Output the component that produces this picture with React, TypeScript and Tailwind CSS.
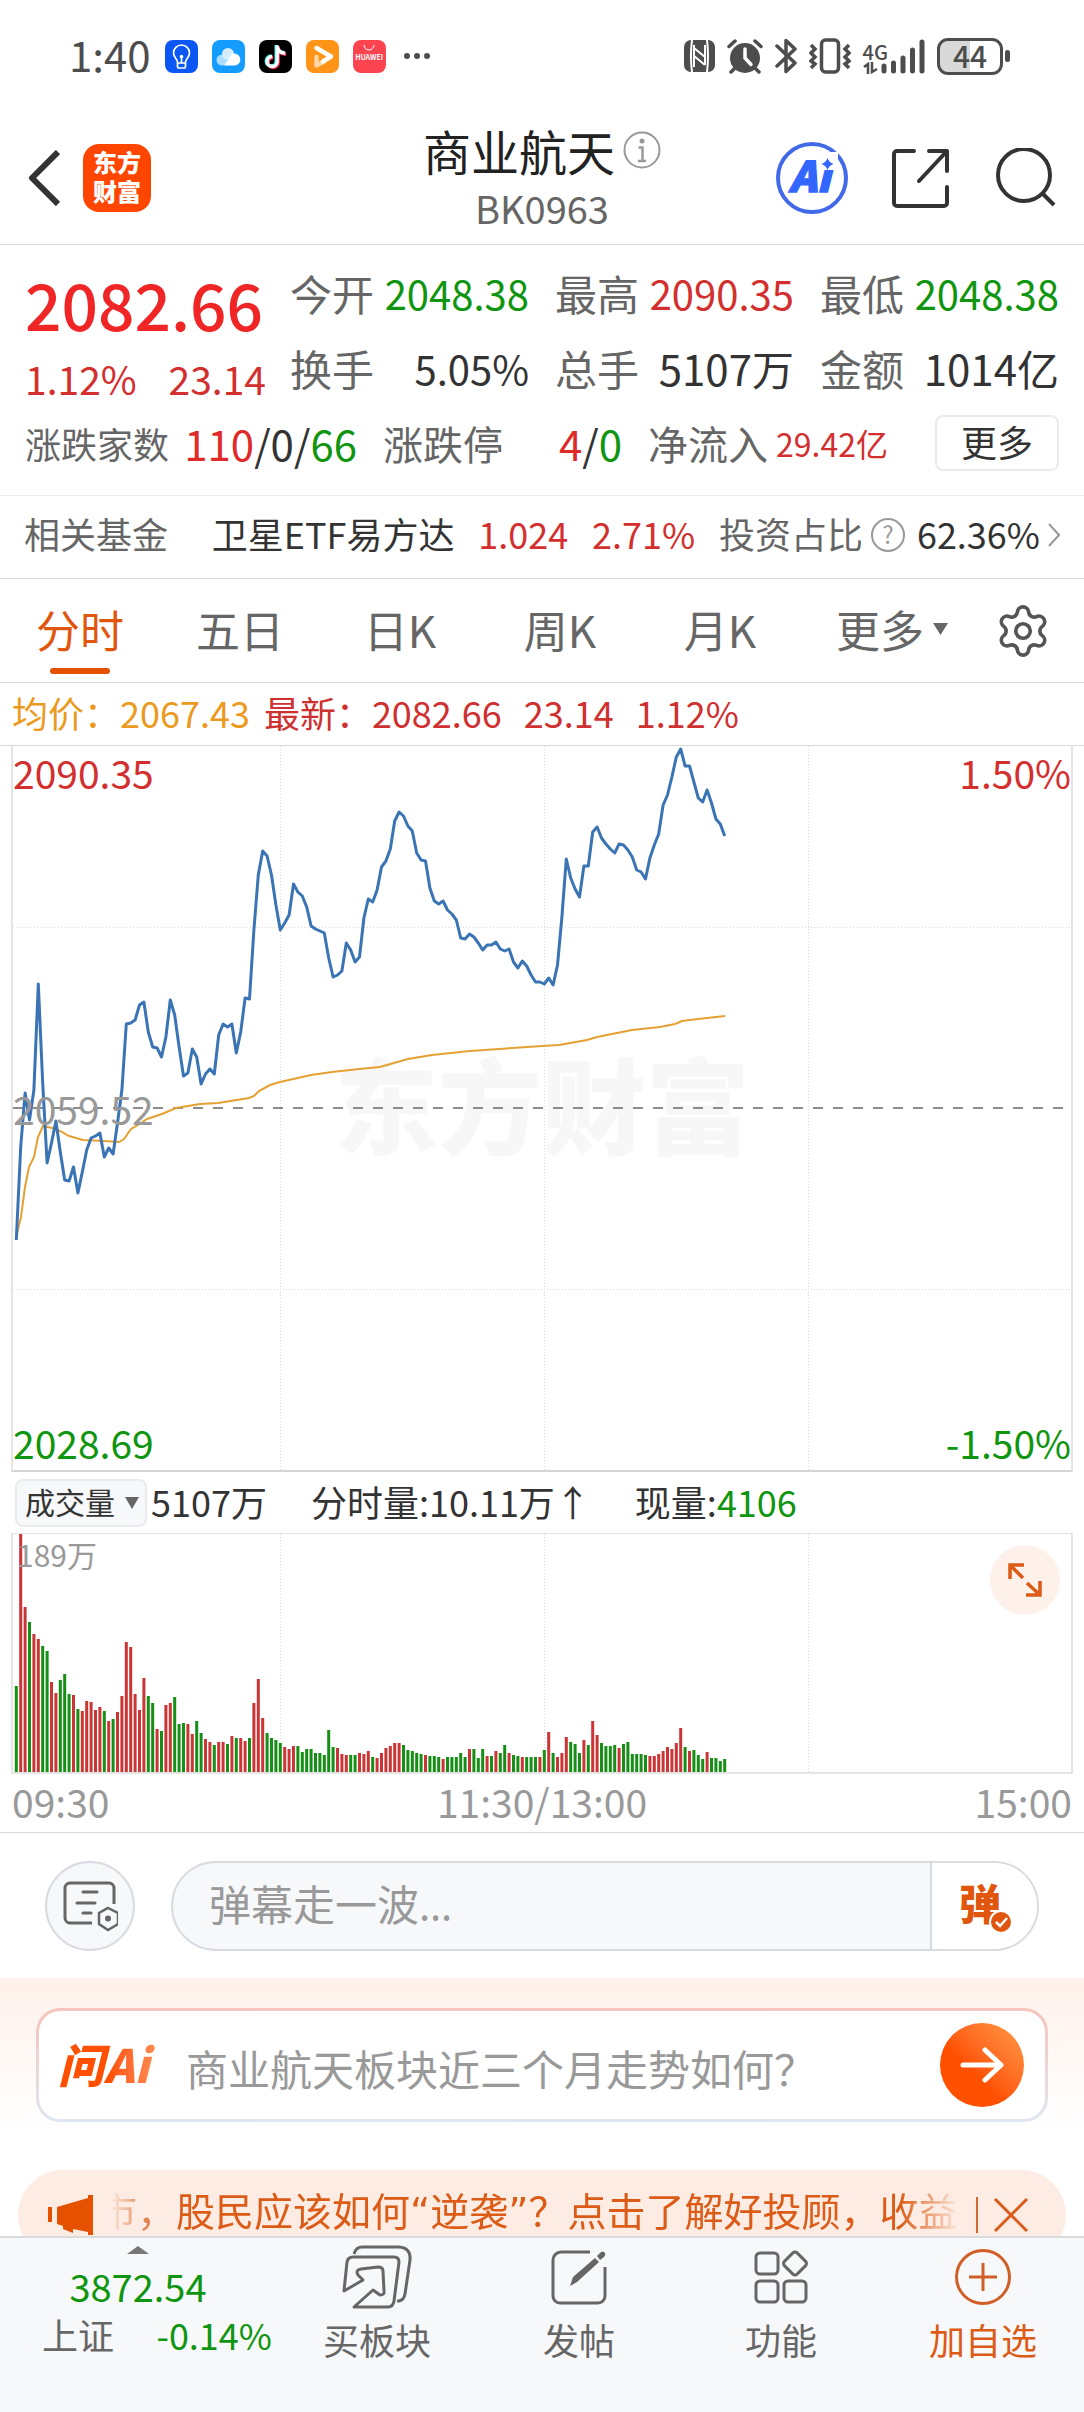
import React from 'react';
import { Settings } from 'lucide-react';

const quotes = [
  { label: '今开', value: '2048.38', style: 'text-[40px] text-[#109510]' },
  { label: '最高', value: '2090.35', style: 'text-[40px] text-[#d32f2f]' },
  { label: '最低', value: '2048.38', style: 'text-[40px] text-[#109510]' },
  { label: '换手', value: '5.05%', style: 'text-[40px] text-[#333]' },
  { label: '总手', value: '5107万', style: 'text-[42px] text-[#333]' },
  { label: '金额', value: '1014亿', style: 'text-[42px] text-[#333]' },
];

const tabs = ['分时', '五日', '日K', '周K', '月K', '更多'];

// one point per minute since 09:30
const FIRST_X = 16.3;
const STEP = 4.4;

const price = [
  1240, 1147, 1093, 1120, 1090, 984, 1083, 1163, 1143, 1121, 1152, 1180, 1181, 1167, 1193, 1172, 1150, 1138, 1136, 1133,
  1157, 1148, 1154, 1123, 1090, 1024, 1023, 1020, 1005, 1002, 1032, 1047, 1048, 1057, 1037, 1000, 1015, 1047, 1076, 1073,
  1049, 1057, 1084, 1074, 1069, 1074, 1035, 1024, 1027, 1024, 1053, 1032, 998, 999, 930, 875, 851, 856, 875, 905,
  930, 923, 915, 884, 892, 896, 907, 926, 929, 931, 933, 958, 977, 975, 971, 943, 950, 962, 957, 918,
  899, 902, 890, 867, 861, 849, 821, 812, 816, 826, 831, 853, 860, 861, 888, 901, 904, 901, 910, 914,
  920, 938, 939, 934, 937, 943, 950, 945, 945, 942, 949, 951, 949, 962, 968, 961, 966, 975, 982, 982,
  984, 978, 985, 965, 917, 859, 878, 889, 897, 866, 866, 832, 827, 838, 844, 849, 853, 844, 845, 850,
  857, 870, 872, 879, 858, 845, 834, 805, 795, 777, 757, 749, 766, 766, 782, 798, 802, 790, 803, 819,
  824, 836,
];

const average = [
  [16, 1238], [21, 1217], [25, 1187], [29, 1167], [34, 1157], [38, 1137], [43, 1126], [52, 1128], [60, 1131],
  [69, 1136], [83, 1140], [104, 1141], [119, 1142], [124, 1139], [131, 1129], [138, 1125], [147, 1119], [162, 1114],
  [176, 1108], [200, 1104], [218, 1103], [249, 1098], [254, 1096], [259, 1091], [270, 1085], [280, 1082], [311, 1075],
  [332, 1072], [359, 1069], [380, 1067], [394, 1063], [408, 1059], [432, 1055], [470, 1051], [512, 1048], [542, 1046],
  [559, 1045], [587, 1040], [597, 1037], [632, 1030], [660, 1027], [675, 1024], [682, 1021], [698, 1019], [725, 1016],
];

// negative = falling minute
const volume = [
  -86, 238, 165, -150, 138, 133, -126, -121, 90, 79, -92, -98, -78, 77, -63, 61, 71, 70, 62, 65,
  -61, 51, -53, 60, 76, 130, 125, 78, 62, 94, -76, -69, 43, -41, 67, 69, -75, -48, -49, 48,
  38, -51, -39, 33, 30, -27, 30, 30, -28, 36, -34, 34, 31, -34, 69, 93, 54, -39, -34, -32,
  -29, 25, 23, 26, -26, -20, -23, -23, -19, -19, -17, -42, -25, 24, 18, 17, -17, -17, 19, 18,
  21, -15, 14, 19, 24, 26, 29, 29, -27, -22, -21, -19, -18, 17, -16, -16, -15, 13, -15, -15,
  -15, -19, -15, 23, -23, -14, -23, 16, -16, 21, -19, -27, 19, -17, -16, 15, -15, -15, -15, 15,
  -22, 40, -19, 15, 19, 35, -30, -28, -19, 32, -27, 51, 37, -29, -26, -26, -27, 24, -28, -30,
  -18, -18, -18, -17, 16, 16, 18, 21, 25, 23, 29, 44, -25, 21, -22, -17, -13, 20, -14, -14,
  -11, -13,
];

function StatusBar() {
  return (
    <div className="h-28 pl-[69px] pr-[74px] flex items-center justify-between text-[#4d4d4d]">
      <div className="flex items-center gap-[14px]">
        <span className="pb-1 text-[42px] leading-[48px]">1:40</span>
        <svg className="w-[33px] h-[33px]" viewBox="0 0 33 33">
          <rect width="33" height="33" rx="8" fill="#0b57f5" />
          <path d="M12.500 22c0-3-4-4.500-4-9a8 8 0 0 1 16 0c0 4.500-4 6-4 9v4.500a1.500 1.500 0 0 1-1.500 1.500h-5a1.500 1.500 0 0 1-1.500-1.500zM12.500 23h8M16.500 23v-6" fill="none" stroke="#fff" strokeWidth="1.700" />
          <circle cx="16.500" cy="16.500" r="1.800" fill="#fff" />
        </svg>
        <svg className="w-[33px] h-[33px]" viewBox="0 0 33 33">
          <rect width="33" height="33" rx="8" fill="#149dff" />
          <circle cx="10" cy="20" r="5.500" fill="#a9dcff" />
          <circle cx="16" cy="14" r="6" fill="#d4eeff" />
          <path d="M12 25.500 20 14a6 6 0 1 1 3 11.500z" fill="#fff" />
        </svg>
        <svg className="w-[33px] h-[33px]" viewBox="0 0 33 33">
          <rect width="33" height="33" rx="8" fill="#000" />
          <g fill="none" strokeWidth="3.400">
            <path d="M17.200 5v16a5 5 0 1 1-5-5M17.200 6c.5 4 3.500 6.500 8 6.800" stroke="#25f4ee" />
            <path d="M19.200 6.500v16a5 5 0 1 1-5-5M19.200 7.500c.5 4 3.500 6.500 8 6.800" stroke="#fe2c55" />
            <path d="M18.200 5.500v16a5 5 0 1 1-5-5M18.200 6.500c.5 4 3.500 6.500 8 6.800" stroke="#fff" />
          </g>
        </svg>
        <svg className="w-[33px] h-[33px]" viewBox="0 0 33 33">
          <rect width="33" height="33" rx="8" fill="#ff9419" />
          <path d="M10.500 17v8.500L17 22" fill="none" stroke="#ffd6a3" strokeWidth="4.500" strokeLinejoin="round" strokeLinecap="round" />
          <path d="M10.500 8 25 16.500l-8 5" fill="none" stroke="#fff" strokeWidth="4.500" strokeLinejoin="round" strokeLinecap="round" />
        </svg>
        <span className="w-[33px] h-[33px] rounded-lg bg-[#fc4350] flex flex-col items-center pt-1">
          <svg className="w-3 h-[9px]" viewBox="0 0 12 9">
            <path d="M1 1a5 5 0 0 0 10 0" fill="none" stroke="#fff" />
          </svg>
          <span className="text-[7px] leading-[9px] font-bold text-white">HUAWEI</span>
        </span>
        <svg className="w-[34px] h-2" viewBox="0 0 34 8" fill="#4d4d4d">
          <circle cx="7" cy="4" r="3" />
          <circle cx="17" cy="4" r="3" />
          <circle cx="27" cy="4" r="3" />
        </svg>
      </div>
      <div className="flex items-center gap-3">
        <svg className="w-[31px] h-8" viewBox="0 0 31 32">
          <rect width="31" height="32" rx="7" fill="#4d4d4d" />
          <path d="M8 0q-2 16-0 32M23 0q2 16 0 32" stroke="#fff" strokeWidth="2" fill="none" />
          <path d="M10 5v22M10 8l11 9M10 16l11 9M21 5v20" stroke="#fff" strokeWidth="2" fill="none" />
        </svg>
        <svg className="w-9 h-[35px]" viewBox="0 0 36 35">
          <circle cx="18" cy="19" r="15" fill="#4d4d4d" />
          <path d="M2 7.500 8 2M34 7.500 28 2M8 29l-4 4M28 29l4 4" stroke="#4d4d4d" strokeWidth="3.500" strokeLinecap="round" />
          <path d="M18 10v9l6 6.500" stroke="#fff" strokeWidth="3.500" fill="none" strokeLinecap="round" />
        </svg>
        <svg className="w-[22px] h-9" viewBox="0 0 22 36">
          <path d="m2 8 18 17-9 8.500V2.500L20 11 2 28" fill="none" stroke="#4d4d4d" strokeWidth="3.500" strokeLinejoin="round" strokeLinecap="round" />
        </svg>
        <svg className="w-[42px] h-9" viewBox="0 0 42 36" fill="none" stroke="#4d4d4d" strokeWidth="3.500">
          <rect x="12.500" y="2" width="17" height="32" rx="4" />
          <path d="m2 7 4 4-4 4 4 4-4 4 4 3-4 4M40 7l-4 4 4 4-4 4 4 4-4 3 4 4" />
        </svg>
        <div className="flex items-end">
          <div className="flex flex-col">
            <span className="text-[20px] leading-[20px] font-medium">4G</span>
            <svg className="w-[15px] h-3" viewBox="0 0 15 12" fill="none" stroke="#4d4d4d" strokeWidth="2.500">
              <path d="M1 5l4-3v10M9 0v10l5-3" />
            </svg>
          </div>
          <svg className="-ml-[7px] w-[44px] h-9" viewBox="0 0 44 36" stroke="#4d4d4d" strokeWidth="5" strokeLinecap="round">
            <path d="M3 28v5M12.500 25v8M22 20v13M31.500 12v21M41 4v29" />
          </svg>
        </div>
        <div className="flex items-center gap-0.5">
          <span className="w-[66px] h-[37px] rounded-[11px] border-[3px] border-[#4d4d4d] bg-gradient-to-r from-[#d9d9d9] from-50% to-white to-50% text-[30px] leading-[28px] font-medium text-center">44</span>
          <span className="w-[5px] h-3 rounded-sm bg-[#4d4d4d]" />
        </div>
      </div>
    </div>
  );
}

function Header() {
  return (
    <header className="h-[133px] px-7 border-b border-[#d9d9d9] grid grid-cols-[1fr_auto_1fr] items-center">
      <div className="flex items-center gap-[23px]">
        <button aria-label="返回">
          <svg className="w-8 h-14" viewBox="0 0 32 56" fill="none" stroke="#333" strokeWidth="6">
            <path d="M30 2 4 28l26 26" strokeLinejoin="round" />
          </svg>
        </button>
        <span className="w-[68px] h-[68px] pb-1 rounded-[16px] bg-[#ff4600] text-white text-[24px] leading-[29px] font-black flex items-center justify-center text-center">
          东方
          <br />
          财富
        </span>
      </div>
      <div className="text-center">
        <h1 className="flex items-center gap-2 text-[48px] leading-[60px] text-[#222]">
          商业航天
          <svg className="w-[38px] h-[38px]" viewBox="0 0 38 38" fill="none" stroke="#999" strokeWidth="2">
            <circle cx="19" cy="19" r="17.500" />
            <circle cx="19" cy="10" r="2.500" fill="#999" stroke="none" />
            <path d="M15.500 16.500h4v13M15 30h8" strokeWidth="2.500" />
          </svg>
        </h1>
        <p className="text-[38px] leading-[56px] text-[#666]">BK0963</p>
      </div>
      <div className="flex items-center justify-end gap-11">
        <button aria-label="AI">
          <svg className="w-[72px] h-[72px]" viewBox="0 0 72 72">
            <circle cx="36" cy="36" r="34" fill="none" stroke="#4169e8" strokeWidth="4" />
            <text x="13" y="50" fontSize="42" className="font-black italic" fill="#3366ff" stroke="#3366ff" strokeWidth="1.500">Ai</text>
            <path d="M42 10h20v18H42z" fill="#fff" />
            <path d="M51.500 16q1.500 4.500 6 6-4.500 1.500-6 6-1.500-4.500-6-6 4.500-1.500 6-6z" fill="#3366ff" />
          </svg>
        </button>
        <button aria-label="分享">
          <svg className="w-[60px] h-[60px]" viewBox="0 0 60 60" fill="none" stroke="#333" strokeWidth="4" strokeLinecap="round" strokeLinejoin="round">
            <path d="M22 3H5a3 3 0 0 0-3 3v49a3 3 0 0 0 3 3h47a3 3 0 0 0 3-3V39M37 3h18v20M55 3 27 33" />
          </svg>
        </button>
        <button aria-label="搜索">
          <svg className="w-[60px] h-[60px]" viewBox="0 0 60 60" fill="none" stroke="#333" strokeWidth="4">
            <circle cx="28" cy="27" r="26" />
            <path d="m46 45 12 12" />
          </svg>
        </button>
      </div>
    </header>
  );
}

function Quote() {
  return (
    <section className="pt-[10px] pb-[15px] px-[25px] border-b border-[#ececec]">
      <div className="flex">
        <div className="w-[265px] pr-6">
          <div className="h-24 flex items-center text-[64px] font-medium text-[#f02525]">2082.66</div>
          <div className="h-[54px] flex items-center justify-between text-[39px] text-[#d32f2f]">
            <span>1.12%</span>
            <span>23.14</span>
          </div>
        </div>
        <dl className="flex-1 grid grid-cols-3 gap-x-[26px]">
          {quotes.map((q) => (
            <div key={q.label} className="h-[75px] flex items-center justify-between whitespace-nowrap">
              <dt className="text-[42px] text-[#666]">{q.label}</dt>
              <dd className={q.style}>{q.value}</dd>
            </div>
          ))}
        </dl>
      </div>
      <div className="h-[75px] grid grid-cols-[332fr_239fr_411fr] gap-x-[26px] items-center whitespace-nowrap">
        <div className="flex items-center justify-between">
          <span className="text-[36px] text-[#666]">涨跌家数</span>
          <span className="text-[42px] text-[#333]">
            <span className="text-[#e02a2a]">110</span>/0/<span className="text-[#109510]">66</span>
          </span>
        </div>
        <div className="flex items-center justify-between">
          <span className="text-[40px] text-[#666]">涨跌停</span>
          <span className="text-[42px] text-[#333]">
            <span className="text-[#e02a2a]">4</span>/<span className="text-[#109510]">0</span>
          </span>
        </div>
        <div className="flex items-center">
          <span className="text-[40px] text-[#666]">净流入</span>
          <span className="ml-2 text-[32px] text-[#d32f2f]">29.42亿</span>
          <button className="ml-auto w-[124px] h-14 pb-1 rounded-lg border-2 border-[#ebebeb] text-[36px] leading-[48px] text-[#333]">更多</button>
        </div>
      </div>
    </section>
  );
}

function FundRow() {
  return (
    <a href="#fund" className="h-[83px] pb-2 px-6 flex items-center justify-between whitespace-nowrap border-b border-[#d9d9d9] text-[36px] text-[#333]">
      <span className="mr-5 text-[#666]">相关基金</span>
      <span>卫星ETF易方达</span>
      <span className="text-[#d32f2f]">1.024</span>
      <span className="text-[#d32f2f]">2.71%</span>
      <span className="flex items-center gap-2">
        <span className="text-[#666]">投资占比</span>
        <span className="mt-1 w-[34px] h-[34px] rounded-full border-2 border-[#999] text-[#999] text-[24px] leading-[28px] text-center">?</span>
        <span className="ml-1">62.36%</span>
        <svg className="mt-1 w-3 h-6" viewBox="0 0 12 24" fill="none" stroke="#999" strokeWidth="2">
          <path d="m1 1 10 11L1 23" />
        </svg>
      </span>
    </a>
  );
}

function Tabs() {
  return (
    <nav className="h-[104px] border-b border-[#d9d9d9] grid grid-cols-[repeat(6,160fr)_124fr] text-[44px]">
      {tabs.map((tab, i) => (
        <button key={tab} className={`relative pb-1 flex items-center justify-center ${i === 0 ? 'text-[#e0560f]' : 'text-[#666]'}`}>
          {tab}
          {i === 0 && <span className="absolute bottom-2 w-[60px] h-1.5 rounded-full bg-[#e65100]" />}
          {tab === '更多' && (
            <svg className="absolute right-3 w-[15px] h-3" viewBox="0 0 15 12" fill="#666">
              <path d="M0 0h15L7.500 12z" />
            </svg>
          )}
        </button>
      ))}
      <button aria-label="设置" className="flex items-center">
        <Settings className="ml-[34px] text-[#555]" size={58} strokeWidth={1.5} />
      </button>
    </nav>
  );
}

function PriceChart() {
  return (
    <section>
      <div className="h-[63px] pb-1 px-3 flex items-center border-b border-[#d9d9d9] text-[36px] text-[#cf3030] whitespace-nowrap">
        <span className="mr-[14px] text-[#eb9a1e]">均价：2067.43</span>
        <span className="mr-[22px]">最新：2082.66</span>
        <span className="mr-[22px]">23.14</span>
        <span>1.12%</span>
      </div>
      <div className="relative mx-[11px] border-x-2 border-b-2 border-x-[#e5e5e5] border-b-[#d5d5d5] text-[39px] leading-[44px]">
        <span className="absolute inset-0 pb-3 flex items-center justify-center text-[104px] font-black text-[#f7f7f7]">东方财富</span>
        <svg className="relative block w-full h-[724px]" viewBox="13 746 1058 724" preserveAspectRatio="none" fill="none">
          <path d="M280.500 746v724M544.500 746v724M808.500 746v724M13 927.500h1058M13 1289.500h1058" stroke="#d9d9d9" strokeDasharray="1 2" />
          <path d="M13 1108h1050" stroke="#8c8c8c" strokeWidth="2" strokeDasharray="10 10" />
          <polyline points={average.map(([x, y]) => `${x},${y}`).join(' ')} stroke="#e5a033" strokeWidth="2" />
          <polyline points={price.map((y, i) => `${FIRST_X + i * STEP},${y}`).join(' ')} stroke="#3a74b5" strokeWidth="3" strokeLinejoin="round" />
        </svg>
        <span className="absolute left-0 top-1 text-[#d32f2f]">2090.35</span>
        <span className="absolute right-0 top-1 text-[#d32f2f]">1.50%</span>
        <span className="absolute left-0 top-1/2 -translate-y-1/2 text-[#999]">2059.52</span>
        <span className="absolute left-0 bottom-1.5 text-[#109510]">2028.69</span>
        <span className="absolute right-0 bottom-1.5 text-[#109510]">-1.50%</span>
      </div>
    </section>
  );
}

function VolumeChart() {
  return (
    <section className="border-b border-[#d9d9d9]">
      <div className="h-[61px] px-[15px] flex items-center text-[36px] text-[#333] whitespace-nowrap">
        <div className="relative mr-1">
          <select aria-label="指标" className="block appearance-none w-[132px] h-12 pb-1 pl-2 rounded-lg border-2 border-[#e9ebee] bg-[#f7f8fa] text-[30px] leading-[40px]">
            <option>成交量</option>
          </select>
          <svg className="absolute right-2 top-[18px] w-[14px] h-3 pointer-events-none" viewBox="0 0 14 12" fill="#666">
            <path d="M0 0h14L7 12z" />
          </svg>
        </div>
        <span className="mr-11 pb-1">5107万</span>
        <span className="mr-11 pb-1">分时量:10.11万↑</span>
        <span className="pb-1">现量:<span className="text-[#109510]">4106</span></span>
      </div>
      <div className="relative mx-[11px] border-2 border-t border-[#e5e5e5]">
        <svg className="block w-full h-[238px]" viewBox="13 1534 1058 238" preserveAspectRatio="none">
          <path d="M280.500 1534v238M544.500 1534v238M808.500 1534v238" stroke="#d9d9d9" strokeDasharray="1 2" />
          {volume.map((v, i) => (
            <rect
              key={i}
              x={FIRST_X + i * STEP - 1.5}
              y={1772 - Math.abs(v)}
              width="3"
              height={Math.abs(v)}
              fill={v > 0 ? '#cc3535' : '#158f15'}
            />
          ))}
        </svg>
        <span className="absolute left-1 top-0 text-[30px] leading-[40px] text-[#999]">189万</span>
        <button aria-label="全屏" className="absolute right-[11px] top-[11px] w-[70px] h-[70px] rounded-full bg-[#fef1ea] flex items-center justify-center">
          <svg className="w-[34px] h-[34px]" viewBox="0 0 34 34" fill="none" stroke="#dc5b16" strokeWidth="3.500">
            <path d="M16 2H2v14M2 2l13 13M32 18v14H18M32 32 19 20" />
          </svg>
        </button>
      </div>
      <div className="h-[58px] pb-1 px-3 flex items-center justify-between text-[39px] text-[#999]">
        <span>09:30</span>
        <span>11:30/13:00</span>
        <span>15:00</span>
      </div>
    </section>
  );
}

function CommentBar() {
  return (
    <form className="pt-7 pb-[27px] pl-[45px] pr-[45px] flex items-center gap-9">
      <button type="button" aria-label="弹幕设置" className="w-[90px] h-[90px] shrink-0 rounded-full border-2 border-[#d8dbe0] bg-[#f7f8fa] flex items-center justify-center">
        <svg className="w-[56px] h-[52px]" viewBox="0 0 56 52" fill="none" stroke="#666" strokeWidth="3">
          <path d="M52 24V8a5 5 0 0 0-5-5H8a5 5 0 0 0-5 5v30a5 5 0 0 0 5 5h22" />
          <path d="M21 12h14M15 23h18M21 33h8" strokeLinecap="round" />
          <path d="m46 28 10 5v11l-10 6-9-6V33z" strokeWidth="2.500" />
          <circle cx="46" cy="38.500" r="3" fill="#666" stroke="none" />
        </svg>
      </button>
      <div className="flex-1 h-[90px] rounded-full border-2 border-[#d8dbe0] bg-[#f7f8fa] overflow-hidden flex">
        <input aria-label="弹幕" placeholder="弹幕走一波…" className="flex-1 min-w-0 px-9 pb-1 font-['Noto_Sans','Noto_Sans_CJK_SC',sans-serif] text-[42px] bg-transparent placeholder-[#999] outline-none" />
        <button type="button" aria-label="弹幕开关" className="w-[107px] pb-2 pl-[27px] border-l-2 border-[#d8dbe0] bg-white text-left text-[#e0560f]">
          <span className="relative inline-block text-[42px] leading-[48px] font-black">
            弹
            <svg className="absolute -right-3 -bottom-2 w-6 h-6" viewBox="0 0 24 24">
              <circle cx="12" cy="12" r="11" fill="#e0560f" stroke="#fff" strokeWidth="2" />
              <path d="m7 12 4 4 7-8" fill="none" stroke="#fff" strokeWidth="2.500" />
            </svg>
          </span>
        </button>
      </div>
    </form>
  );
}

function AskCard() {
  return (
    <section className="h-48 pt-[30px] px-9 bg-gradient-to-b from-[#fff1eb] to-white to-80%">
      <div className="h-[114px] p-[3px] rounded-3xl bg-gradient-to-b from-[#f5c4bc] to-[#dfe6f1]">
        <div className="h-full pl-[19px] pr-[21px] rounded-[21px] bg-white flex items-center">
          <span className="w-[102px] pb-1 text-[46px] font-black italic whitespace-nowrap text-transparent bg-clip-text bg-gradient-to-r from-[#ff5000] from-50% to-[#ff9055]">问Ai</span>
          <input aria-label="问AI" placeholder="商业航天板块近三个月走势如何？" className="flex-1 min-w-0 ml-[26px] pt-1 text-[42px] bg-transparent placeholder-[#999] outline-none" />
          <button aria-label="发送" className="w-[84px] h-[84px] rounded-full bg-gradient-to-bl from-[#ff9a45] to-[#ff5000] to-60% flex items-center justify-center">
            <svg className="w-11 h-9" viewBox="0 0 44 36" fill="none" stroke="#fff" strokeWidth="5" strokeLinecap="round" strokeLinejoin="round">
              <path d="M3 18h38M25 3l16 15-16 15" />
            </svg>
          </button>
        </div>
      </div>
    </section>
  );
}

function Notice() {
  return (
    <div className="mx-[18px] h-[90px] pl-[30px] pr-[38px] rounded-full bg-[#fcece3] flex items-center text-[#dc5b16]">
      <svg className="w-[46px] h-10 shrink-0" viewBox="0 0 46 40" fill="#e65100">
        <path d="M0 12h4v15H0zM9 12l31-9V0h5v40h-5v-3l-15-3v4l-10-4v-3l-6-2z" />
      </svg>
      <div className="ml-4 pb-1 flex-1 min-w-0 overflow-hidden whitespace-nowrap -indent-3 text-[39px] leading-[56px] font-['DejaVu_Sans','Noto_Sans_CJK_SC',sans-serif] [mask-image:linear-gradient(to_right,transparent,black_50px,black_calc(100%-60px),transparent)]">
        市，股民应该如何“逆袭”？点击了解好投顾，收益涨
      </div>
      <span className="ml-4 w-0.5 h-9 bg-[#cf6a35]" />
      <button aria-label="关闭" className="ml-4">
        <svg className="w-[34px] h-[34px]" viewBox="0 0 34 34" stroke="#dc5b16" strokeWidth="3">
          <path d="m1 1 32 32M33 1 1 33" />
        </svg>
      </button>
    </div>
  );
}

function BottomBar() {
  return (
    <nav className="fixed inset-x-0 bottom-0 h-44 border-t-2 border-[#d8dade] bg-[#f7f8fa] grid grid-cols-[276fr_repeat(4,202fr)] text-[36px] leading-[44px] text-[#666]">
      <button className="pt-2 flex flex-col items-center text-[#109510]">
        <svg className="w-[22px] h-2" viewBox="0 0 22 8" fill="#777">
          <path d="M0 8 11 0l11 8z" />
        </svg>
        <span className="mt-2 text-[38px] leading-[48px]">3872.54</span>
        <span className="mt-0.5 w-full pl-[42px] pr-1 flex justify-between">
          <span className="text-[#666]">上证</span>
          <span>-0.14%</span>
        </span>
      </button>
      <button className="pt-[7px] flex flex-col items-center">
        <svg className="w-[72px] h-16" viewBox="0 0 72 64" fill="none" stroke="#666" strokeWidth="3">
          <path d="M13 9q2-7 8-7h37q12 1 11 13l-5 34q-1 6-6 7h-2" />
          <path d="m3 46 3-29q1-5 6-5h41q5 0 5 5l-5 39q-1 6-6 6H13l19-17 7 5q5 0 4-4l-1-20q0-4-5-4l-17 2q-6 1-3 6l5 5z" strokeLinejoin="round" />
        </svg>
        <span className="mt-2">买板块</span>
      </button>
      <button className="pt-[11px] flex flex-col items-center">
        <svg className="w-14 h-14" viewBox="0 0 56 56" fill="none" stroke="#666" strokeWidth="3">
          <path d="M39 3H10a8 8 0 0 0-8 8v36a7 7 0 0 0 7 7h38a7 7 0 0 0 7-7V18" />
          <path d="m19 37 3-9L44 9l4 4-22 20zM46 7l4-4q3-1 4 1t-1 4l-4 3z" fill="#666" stroke="none" />
        </svg>
        <span className="mt-3">发帖</span>
      </button>
      <button className="pt-[11px] flex flex-col items-center">
        <svg className="w-14 h-14" viewBox="0 0 56 56" fill="none" stroke="#666" strokeWidth="3">
          <rect x="3" y="4" width="22" height="21" rx="4" />
          <rect x="3" y="32" width="22" height="21" rx="4" />
          <rect x="31" y="32" width="22" height="21" rx="4" />
          <rect x="33" y="5.500" width="18" height="18" rx="3" transform="rotate(45 42 14.500)" />
        </svg>
        <span className="mt-3">功能</span>
      </button>
      <button className="pt-[11px] flex flex-col items-center text-[#dc5b16]">
        <svg className="w-14 h-14" viewBox="0 0 56 56" fill="none" stroke="#cf5f26" strokeWidth="3">
          <circle cx="28" cy="28" r="26.500" />
          <path d="M28 14v28M14 28h28" />
        </svg>
        <span className="mt-3">加自选</span>
      </button>
    </nav>
  );
}

export default function App() {
  return (
    <div className="min-h-screen bg-white font-['Noto_Sans_CJK_SC',sans-serif]">
      <StatusBar />
      <Header />
      <main>
        <Quote />
        <FundRow />
        <Tabs />
        <PriceChart />
        <VolumeChart />
        <CommentBar />
        <AskCard />
        <Notice />
      </main>
      <BottomBar />
    </div>
  );
}
